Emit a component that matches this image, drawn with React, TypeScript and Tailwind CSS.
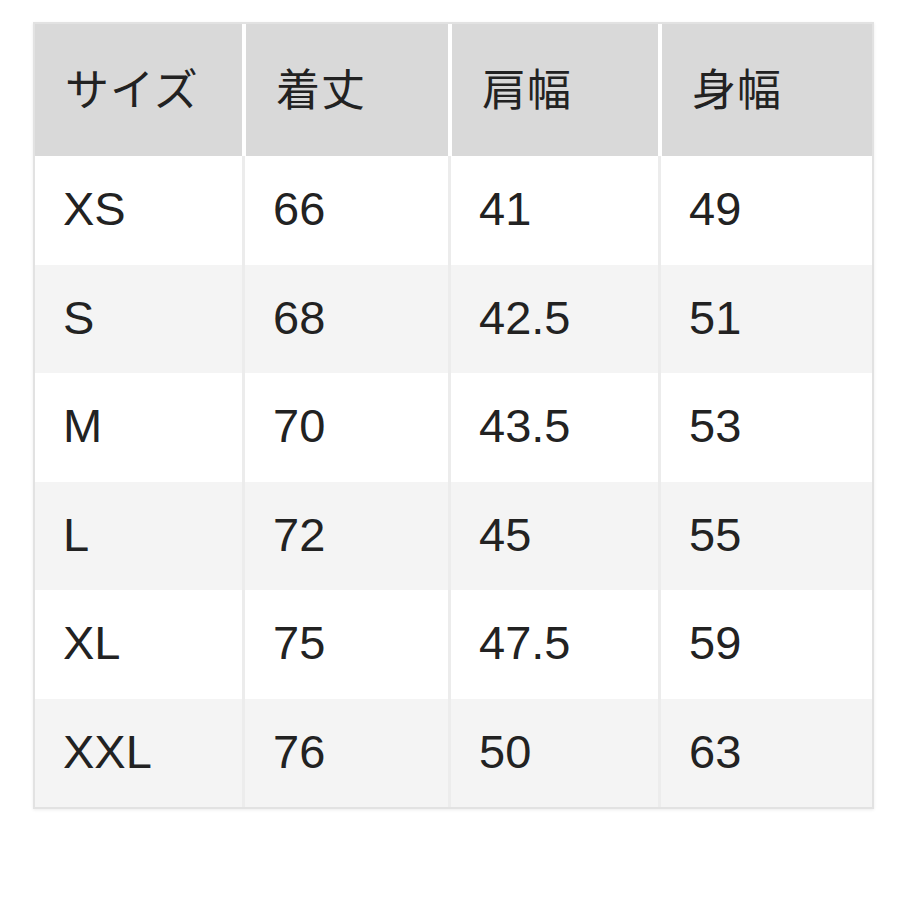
import React from "react"

const headers = ["サイズ", "着丈", "肩幅", "身幅"]

const rows = [
  ["XS", "66", "41", "49"],
  ["S", "68", "42.5", "51"],
  ["M", "70", "43.5", "53"],
  ["L", "72", "45", "55"],
  ["XL", "75", "47.5", "59"],
  ["XXL", "76", "50", "63"],
]

export default function App() {
  return (
    <div
      className="w-[900px] h-[900px] bg-white pt-[22px] pl-[33px]"
      style={{ fontFamily: '"Liberation Sans", "Noto Sans CJK JP", sans-serif' }}
    >
      <div className="w-[841px] border-2 border-[#e2e2e2] shadow-[0_1px_3px_rgba(0,0,0,0.08)] bg-white text-[#222]">
        {/* header */}
        <div className="grid grid-cols-[207px_206px_210px_1fr] h-[132px] bg-white text-[44px]">
          {headers.map((h, j) => (
            <div
              key={h}
              className={
                "bg-[#d9d9d9] bg-clip-padding flex items-center pl-[30px] pt-[2px] tracking-[1px] " +
                (j > 0 ? "border-l-[4px] border-white" : "")
              }
            >
              {h}
            </div>
          ))}
        </div>
        {/* body */}
        {rows.map((r, i) => (
          <div
            key={r[0]}
            className={
              "grid grid-cols-[207px_206px_210px_1fr] h-[108.5px] text-[47px] " +
              (i % 2 === 0 ? "bg-white" : "bg-[#f4f4f4]")
            }
          >
            {r.map((c, j) => (
              <div
                key={j}
                className={
                  "flex items-center pl-[28px] pb-[2px] " +
                  (j > 0 ? "border-l-[3px] border-[#ececec]" : "")
                }
              >
                {c}
              </div>
            ))}
          </div>
        ))}
      </div>
    </div>
  )
}
